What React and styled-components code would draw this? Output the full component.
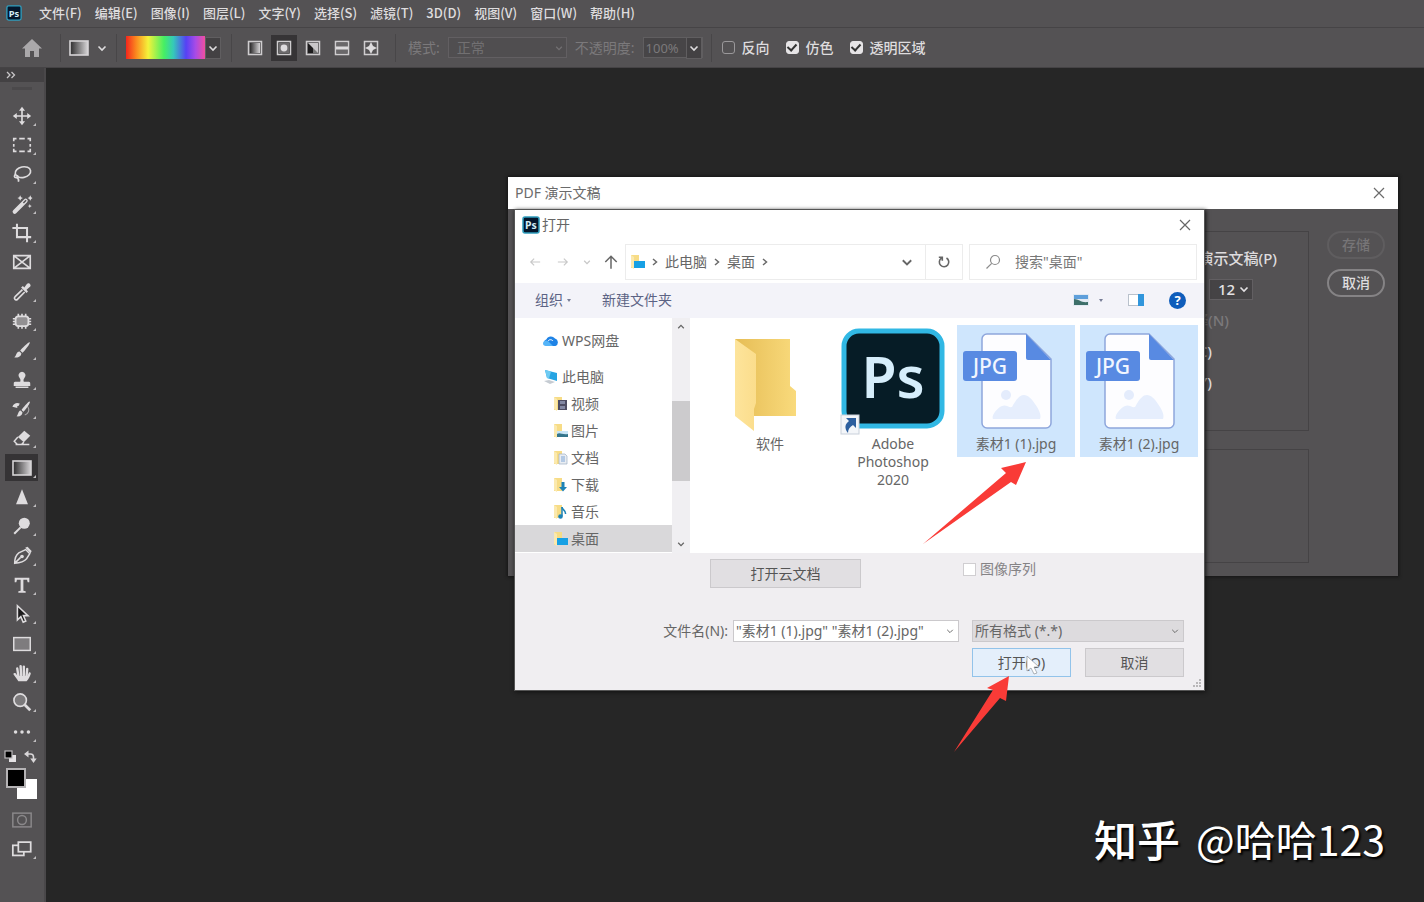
import React from "react";
import styled, { createGlobalStyle } from "styled-components";

const App = () => {
  return (
    <Page>
      <GlobalStyle />
      <MenuBar />
      <OptionsBar />
      <Workspace>
        <Toolbox />
        <Canvas>
          <PdfWindow />
          <OpenDialog />
          <Annotations />
          <Watermark>
            <b>知乎</b>
            <span>@哈哈123</span>
          </Watermark>
        </Canvas>
      </Workspace>
    </Page>
  );
};

const menus = [
  "文件(F)",
  "编辑(E)",
  "图像(I)",
  "图层(L)",
  "文字(Y)",
  "选择(S)",
  "滤镜(T)",
  "3D(D)",
  "视图(V)",
  "窗口(W)",
  "帮助(H)",
];

const MenuBar = () => (
  <StyledMenuBar>
    <PsLogo size={16} />
    <MenuList>
      {menus.map((menu) => (
        <MenuButton key={menu} type="button">
          {menu}
        </MenuButton>
      ))}
    </MenuList>
  </StyledMenuBar>
);

const PsLogo = ({ size }) => (
  <svg width={size} height={size} viewBox="0 0 18 18" aria-label="Photoshop">
    <rect x="1" y="1" width="16" height="16" rx="2" fill="#04162c" stroke="#2f9dbd" strokeWidth="1.5" />
    <text x="9" y="13" textAnchor="middle" fontFamily="Noto Sans" fontSize="10.5" fontWeight="700" fill="#d3ecf6">
      Ps
    </text>
  </svg>
);

const Chevron = ({ size = 10, width = 1.6 }) => (
  <svg width={size} height={size} viewBox="0 0 10 10" fill="none" stroke="currentColor" strokeWidth={width}>
    <path d="M1.5 3.5 5 7l3.500-3.500" />
  </svg>
);

const CloseIcon = () => (
  <svg width="12" height="12" viewBox="0 0 12 12" stroke="currentColor" strokeWidth="1.2">
    <path d="M1 1l10 10M11 1 1 11" />
  </svg>
);

const GradientIcon = ({ w = 20, h = 16 }) => (
  <svg width={w} height={h} viewBox="0 0 20 16">
    <defs>
      <linearGradient id="grey">
        <stop offset="0" stopColor="#2c2b2c" />
        <stop offset="1" stopColor="#d8d6d8" />
      </linearGradient>
    </defs>
    <rect x="1" y="1" width="18" height="14" fill="url(#grey)" stroke="#d6d4d6" strokeWidth="1.6" />
  </svg>
);

const gradientModes = [
  {
    name: "线性渐变",
    art: <rect x="3" y="3" width="10" height="10" fill="url(#grey)" />,
  },
  {
    name: "径向渐变",
    on: true,
    art: (
      <>
        <rect x="3" y="3" width="10" height="10" fill="#6d6b6d" />
        <circle cx="8" cy="8" r="3.4" fill="#dddbdd" />
      </>
    ),
  },
  {
    name: "角度渐变",
    art: (
      <>
        <rect x="3" y="3" width="10" height="10" fill="#c9c7c9" />
        <path d="M3 3l5 5v5H3z" fill="#1d1c1d" />
        <path d="M8 8l5 5H8z" fill="#777" />
      </>
    ),
  },
  {
    name: "对称渐变",
    art: (
      <>
        <rect x="3" y="3" width="10" height="10" fill="#6a686a" />
        <rect x="2" y="6.5" width="12" height="3" fill="#dddbdd" />
      </>
    ),
  },
  {
    name: "菱形渐变",
    art: (
      <>
        <rect x="3" y="3" width="10" height="10" fill="#555355" />
        <path d="M8 2l2 4 4 2-4 2-2 4-2-4-4-2 4-2z" fill="#dddbdd" />
      </>
    ),
  },
];

const OptionsBar = () => (
  <StyledOptionsBar>
    <HomeCell>
      <BareButton type="button" aria-label="主页">
        <svg width="20" height="18" viewBox="0 0 20 18" fill="#aaa8aa">
          <path d="M10 0 20 9.5h-3V18h-5v-6H8v6H3V9.5H0z" />
        </svg>
      </BareButton>
    </HomeCell>
    <ToolCell>
      <GradientIcon />
      <Chevron />
    </ToolCell>
    <GradientCell>
      <Rainbow />
      <DropButton type="button" aria-label="渐变选择">
        <Chevron />
      </DropButton>
    </GradientCell>
    <ModeCell>
      {gradientModes.map(({ name, on, art }) => (
        <ModeButton key={name} type="button" aria-label={name} $on={on}>
          <svg width="16" height="16" viewBox="0 0 16 16">
            <rect x="1.5" y="1.5" width="13" height="13" fill="none" stroke="#cfcdcf" strokeWidth="1.5" />
            {art}
          </svg>
        </ModeButton>
      ))}
    </ModeCell>
    <BlendCell>
      <DimLabel htmlFor="blend">模式:</DimLabel>
      <DarkSelect $width={119}>
        <select id="blend" disabled defaultValue="正常">
          <option>正常</option>
        </select>
        <Chevron size={8} />
      </DarkSelect>
      <DimLabel htmlFor="opacity">不透明度:</DimLabel>
      <Opacity>
        <input id="opacity" disabled defaultValue="100%" />
        <DropButton type="button" aria-label="不透明度选项">
          <Chevron />
        </DropButton>
      </Opacity>
    </BlendCell>
    <CheckCell>
      <DarkCheck>
        <input type="checkbox" />
        反向
      </DarkCheck>
      <DarkCheck>
        <input type="checkbox" defaultChecked />
        仿色
      </DarkCheck>
      <DarkCheck>
        <input type="checkbox" defaultChecked />
        透明区域
      </DarkCheck>
    </CheckCell>
  </StyledOptionsBar>
);

const line = { fill: "none", stroke: "currentColor", strokeWidth: 1.8 };

const tools = [
  {
    name: "移动",
    art: (
      <>
        <path d="M12 5v14M5 12h14" {...line} />
        <path d="M12 2l3.300 4.300H8.700zM12 22l3.300-4.300H8.700zM2 12l4.300-3.300v6.600zM22 12l-4.300-3.300v6.600z" />
      </>
    ),
  },
  {
    name: "矩形选框",
    art: <path d="M3 8V5h3M9 5h6M18 5h3v3M21 11v3M21 16v3h-3M15 19H9M6 19H3v-3M3 14v-3" {...line} />,
  },
  {
    name: "套索",
    art: (
      <>
        <ellipse cx="13" cy="10" rx="8.500" ry="5.800" transform="rotate(-12 13 10)" {...line} />
        <path d="M5 12c-2 2-1.500 4 .5 4s3-1.500 1-2.500M6.500 16c2 1 2 3 1.500 4.500" {...line} />
      </>
    ),
  },
  {
    name: "魔棒",
    art: (
      <>
        <path d="M4 20.500 16 8.500" stroke="currentColor" strokeWidth="4.500" strokeLinecap="round" />
        <path d="M13.500 11l3-3" stroke="#545254" strokeWidth="1.500" />
        <path d="M10 2.500l1 2 2 1-2 1-1 2-1-2-2-1 2-1zM21 2.500l1 2 1.500 1-1.500 1-1 2-1-2-2-1 2-1zM20.500 12l.7 1.500 1.500.7-1.500.7-.7 1.500-.7-1.500-1.500-.7 1.500-.7z" />
      </>
    ),
  },
  {
    name: "裁剪",
    art: <path d="M6.500 2v14.500H22M1.500 6.500h16V22" {...line} strokeWidth="2.2" />,
  },
  {
    name: "图框",
    noMore: true,
    art: <path d="M3 5h18v14H3zM3 5l18 14M21 5 3 19" {...line} />,
  },
  {
    name: "吸管",
    art: (
      <>
        <path d="M12.500 9.500 4.500 17c-2 2 .5 5 2.500 3l8-8" {...line} />
        <path d="M11 7l2-1.500 1.500 1.500 3-4c2-2 5 1 3.500 3l-4 3.500 1.500 2L17 13z" />
      </>
    ),
  },
  {
    name: "修补",
    art: (
      <>
        <rect x="5" y="7" width="14" height="10.500" rx="3" fill="#929092" stroke="currentColor" strokeWidth="2" />
        <path d="M8 4v3M12 4v3M16 4v3M8 17v3.500M12 17v3.500M16 17v3.500M2 9.500h3M2 12.500h3M2 15.500h3M19 9.500h3M19 12.500h3M19 15.500h3" {...line} />
      </>
    ),
  },
  {
    name: "画笔",
    art: (
      <path d="M20.500 3.500c1 1-6 10-8 11.500l-2.500-2.500c1.500-2 9.500-10 10.500-9zM9.300 13.500l2 2c0 3-3.300 5.500-7.800 4.500 2.500-1.500 2-6.500 5.800-6.500z" />
    ),
  },
  {
    name: "仿制图章",
    art: (
      <path d="M12 3a4 4 0 0 1 2.500 7c-1 1-1 2.500-.5 4h5.500c1 0 1.500.8 1.500 2v2.500H3V16c0-1.200.5-2 1.500-2H10c.5-1.500.5-3-.5-4A4 4 0 0 1 12 3zM5 19h14v1.800H5z" />
    ),
  },
  {
    name: "历史记录画笔",
    art: (
      <>
        <path d="M20.500 4c1 1-5 9.500-7 11l-2-2c1.500-2 8-10 9-9zM10.500 13.500l2 2c0 3-2.500 5-6.500 4.500 2-1.500 1.500-6 4.500-6.500zM1.500 9.500c1.500-4 5-5 8-3.500l-1 2.500c-2 0-2 1-1.500 2.500z" />
        <path d="M18 9c3 4 1 8-3 9.500" {...line} strokeWidth="1.200" opacity=".6" />
      </>
    ),
  },
  {
    name: "橡皮擦",
    art: (
      <>
        <path d="M14.500 4 21 9.500l-7 7L7.500 11z" />
        <path d="M7.500 11 3.500 15.500 7 19h4.500l2.500-2.500M5 19.200h15" {...line} strokeWidth="1.600" />
      </>
    ),
  },
  { name: "渐变", on: true, art: null },
  { name: "锐化", art: <path d="M12 3.500 18.500 20h-13z" /> },
  {
    name: "减淡",
    art: (
      <>
        <circle cx="14.500" cy="9" r="6" />
        <path d="M10.500 13.500 3.500 20.500" {...line} strokeWidth="2.200" />
      </>
    ),
  },
  {
    name: "钢笔",
    art: (
      <>
        <path d="M4 20c0-5 1-9 4.500-11.500L16 5l4.500 4.500L17 15c-3 3.500-7 4.500-13 5zM4.500 19.500l6-6" {...line} strokeWidth="1.600" />
        <circle cx="12" cy="12.500" r="2" />
        <path d="M15.500 3l6 6 1-2.500-4.500-4.500z" />
      </>
    ),
  },
  {
    name: "文字",
    art: <path d="M4 4h16v5h-1.800l-.7-2.800H13.500v12l2.500.6V20.500H8v-1.700l2.500-.6v-12H6.500L5.800 9H4z" />,
  },
  {
    name: "路径选择",
    art: (
      <path
        d="M7 3v15.500l3.700-3.600 2.600 6 2.800-1.200-2.600-5.900h5z"
        fill="#1c1b1c"
        stroke="currentColor"
        strokeWidth="1.700"
      />
    ),
  },
  {
    name: "矩形",
    art: <rect x="3" y="5" width="18" height="14" fill="#7e7c7e" stroke="currentColor" strokeWidth="1.600" />,
  },
  {
    name: "抓手",
    art: (
      <>
        <path d="M8 21c-1.500-2.500-3.500-5-5.500-8 .8-1.500 2.500-1 3.500.5l1.500 1.500h10.500l1.500-3.500c1-1 2.500 0 2 1.500-1 3-2.500 6-4.500 8z" />
        <path d="M8 15 6.800 7M11 14.500 10.500 4.500M14 14.500V5M17 15l.7-7.500" stroke="currentColor" strokeWidth="2.600" strokeLinecap="round" />
      </>
    ),
  },
  {
    name: "缩放",
    art: (
      <>
        <circle cx="10" cy="10" r="6.800" fill="#7b797b" stroke="currentColor" strokeWidth="1.800" />
        <path d="M15 15l6 6" stroke="currentColor" strokeWidth="3" />
      </>
    ),
  },
  {
    name: "编辑工具栏",
    art: (
      <>
        <circle cx="5" cy="12" r="1.900" />
        <circle cx="12" cy="12" r="1.900" />
        <circle cx="19" cy="12" r="1.900" />
      </>
    ),
  },
];

const Tool = ({ name, art, on, noMore, dim }) => (
  <ToolButton type="button" aria-label={name} $on={on} $noMore={noMore} $dim={dim}>
    {art ? (
      <svg width="22" height="22" viewBox="0 0 24 24" fill="currentColor">
        {art}
      </svg>
    ) : (
      <GradientIcon />
    )}
  </ToolButton>
);

const Toolbox = () => (
  <StyledToolbox>
    <ToolboxHead>
      <svg width="10" height="8" viewBox="0 0 10 8" fill="none" stroke="#c8c6c8" strokeWidth="1.3">
        <path d="M1 1l3 3-3 3M5.500 1l3 3-3 3" />
      </svg>
    </ToolboxHead>
    <Grip />
    <ToolList>
      {tools.map((tool) => (
        <li key={tool.name}>
          <Tool {...tool} />
        </li>
      ))}
    </ToolList>
    <SwatchActions>
      <svg width="13" height="13" viewBox="0 0 13 13">
        <rect x="5" y="5" width="7" height="7" fill="#e4e2e4" />
        <rect x="1" y="1" width="7" height="7" fill="#000" stroke="#bbb9bb" strokeWidth="1.2" />
      </svg>
      <svg width="13" height="13" viewBox="0 0 13 13" fill="#d8d6d8">
        <path d="M4 4h2.500c2 0 3 1 3 3v2" fill="none" stroke="#d8d6d8" strokeWidth="1.600" />
        <path d="M0 4l4.500-3.500v7zM9.500 13 6.300 8.500h6.400z" />
      </svg>
    </SwatchActions>
    <Swatches>
      <Swatch $back />
      <Swatch />
    </Swatches>
    <ToolList>
      <li>
        <Tool
          name="快速蒙版"
          noMore
          dim
          art={
            <g fill="none" stroke="currentColor" strokeWidth="1.600">
              <rect x="2" y="4.500" width="20" height="15" />
              <circle cx="12" cy="12" r="4.800" />
            </g>
          }
        />
      </li>
      <li>
        <Tool
          name="屏幕模式"
          art={
            <g fill="#545254" stroke="currentColor" strokeWidth="1.900">
              <rect x="2" y="8" width="12" height="11" />
              <rect x="8" y="4.500" width="13.500" height="10.500" />
            </g>
          }
        />
      </li>
    </ToolList>
  </StyledToolbox>
);

const PdfWindow = () => (
  <StyledPdfWindow>
    <PdfTitle>
      <span>PDF 演示文稿</span>
      <BareButton type="button" aria-label="关闭">
        <CloseIcon />
      </BareButton>
    </PdfTitle>
    <PdfBody>
      <PdfGroups>
        <PdfGroup>
          <PdfRow $end={31}>演示文稿(P)</PdfRow>
          <PdfRow $end={55}>
            <DarkSelect $width={44} $bright>
              <select aria-label="字体大小" defaultValue="12">
                <option>12</option>
              </select>
              <Chevron />
            </DarkSelect>
          </PdfRow>
          <PdfRow $end={79} $dim>
            注释(N)
          </PdfRow>
          <PdfRow $end={96}>背景(C)</PdfRow>
          <PdfRow $end={96}>作者(Y)</PdfRow>
        </PdfGroup>
        <PdfGroup $short />
      </PdfGroups>
      <PdfActions>
        <PillButton type="button" disabled>
          存储
        </PillButton>
        <PillButton type="button">取消</PillButton>
      </PdfActions>
    </PdfBody>
  </StyledPdfWindow>
);

const SmallFolder = ({ children }) => (
  <svg width="16" height="16" viewBox="0 0 16 16">
    <path d="M2 1h8v13H2z" fill="#f7dc86" />
    <path d="M2 1l3 2v12l-3-2z" fill="#fbe9ae" />
    {children}
  </svg>
);

const DesktopFolder = () => (
  <SmallFolder>
    <path d="M5 7h11v7H5z" fill="#17a0e4" />
  </SmallFolder>
);

const places = [
  {
    name: "WPS网盘",
    icon: (
      <svg width="16" height="16" viewBox="0 0 16 16">
        <path d="M4 13a3.500 3.500 0 0 1-.5-6.800A5 5 0 0 1 12 5.500a4 4 0 0 1 .5 7.500z" fill="#1f83e6" />
        <path d="M0 10.500C0 8 3 6.500 5 8l5 5H3c-2 0-3-1-3-2.500z" fill="#54b4f8" />
        <path d="M5 8c1.500-2 4-1.500 5 0" fill="none" stroke="#fff" />
      </svg>
    ),
  },
  {
    name: "此电脑",
    icon: (
      <svg width="16" height="16" viewBox="0 0 16 16">
        <path d="M2 1l12 3v8L4 9z" fill="#25a4e3" />
        <path d="M2 1l6 1.500L6 9.500 4 9z" fill="#6fcbf3" />
        <path d="M1 12l5-1 6 2-5 2z" fill="#c5cbd2" />
      </svg>
    ),
  },
  {
    name: "视频",
    sub: true,
    icon: (
      <SmallFolder>
        <path d="M6 4h9v10H6z" fill="#4d4d63" />
        <path d="M8 5h5v3H8zM8 10h5v3H8z" fill="#8288a3" />
      </SmallFolder>
    ),
  },
  {
    name: "图片",
    sub: true,
    icon: (
      <SmallFolder>
        <path d="M5 8h11v6H5z" fill="#c8e5f6" />
        <path d="M5 11c3-2 5 1 11 0v3H5z" fill="#34758c" />
      </SmallFolder>
    ),
  },
  {
    name: "文档",
    sub: true,
    icon: (
      <SmallFolder>
        <path d="M7 4h6l2 2v8H7z" fill="#e9edf2" stroke="#9fb0c4" strokeWidth=".7" />
        <path d="M9 7h4M9 9h4M9 11h4" stroke="#7fa6d6" />
      </SmallFolder>
    ),
  },
  {
    name: "下载",
    sub: true,
    icon: (
      <SmallFolder>
        <path d="M9.500 5h3v5H15l-4 4.500L7 10h2.500z" fill="#1d83b7" />
      </SmallFolder>
    ),
  },
  {
    name: "音乐",
    sub: true,
    icon: (
      <SmallFolder>
        <path d="M10 3c0 3 4 3 3.500 7" fill="none" stroke="#1d83b7" strokeWidth="1.500" />
        <path d="M10 3v9" stroke="#1d83b7" strokeWidth="1.500" />
        <circle cx="8.500" cy="12.500" r="2.300" fill="#1d83b7" />
      </SmallFolder>
    ),
  },
  { name: "桌面", sub: true, on: true, icon: <DesktopFolder /> },
];

const FolderArt = () => (
  <svg width="118" height="110" viewBox="0 0 118 110">
    <defs>
      <linearGradient id="folderBack">
        <stop offset="0" stopColor="#e6bd55" />
        <stop offset="1" stopColor="#f9da7c" />
      </linearGradient>
      <linearGradient id="folderFront">
        <stop offset="0" stopColor="#fde49b" />
        <stop offset="1" stopColor="#fbdd8c" />
      </linearGradient>
    </defs>
    <path d="M24 14h55v47l6 5v25H40z" fill="url(#folderBack)" />
    <path d="M24 14l21 15v49l-2 6v22L24 91z" fill="url(#folderFront)" />
  </svg>
);

const PhotoshopArt = () => (
  <svg width="118" height="110" viewBox="0 0 118 110">
    <rect x="10" y="6" width="98" height="95" rx="15" fill="#061c26" stroke="#31b8e4" strokeWidth="5" />
    <text x="59" y="73" textAnchor="middle" fontFamily="Noto Sans" fontSize="57" fontWeight="600" fill="#d6eefb">
      Ps
    </text>
    <rect x="7" y="90" width="18" height="19" fill="#f4f6f9" stroke="#c9d0da" />
    <path d="M12 93h10v10l-3-3c-3 2-5 4-5 8-4-5-3-9 1-12z" fill="#2d5f9e" />
  </svg>
);

const JpgArt = () => (
  <svg width="118" height="110" viewBox="0 0 118 110">
    <path
      d="M30 9h39l25 25v64a5 5 0 0 1-5 5H30a5 5 0 0 1-5-5V14a5 5 0 0 1 5-5z"
      fill="#fdfdff"
      stroke="#8ea6dc"
      strokeWidth="1.500"
    />
    <path d="M69 9l25 26H71a2 2 0 0 1-2-2z" fill="#588ae2" />
    <circle cx="49" cy="70" r="5" fill="#e4ecfc" />
    <path d="M36 94c-2-3 4-11 9-13 4-2 7 2 10 1 5-9 8-12 12-12s8 4 11 9c3 4 7 11 5 15z" fill="#e6eefd" />
    <rect x="6" y="26" width="54" height="30" rx="3" fill="#588ae2" />
    <text x="33" y="49" textAnchor="middle" fontFamily="Noto Sans" fontSize="21" fontWeight="500" fill="#f2f6ff">
      JPG
    </text>
  </svg>
);

const files = [
  { name: "软件", art: <FolderArt /> },
  { name: "Adobe Photoshop 2020", art: <PhotoshopArt /> },
  { name: "素材1 (1).jpg", art: <JpgArt />, on: true },
  { name: "素材1 (2).jpg", art: <JpgArt />, on: true },
];

const ArrowIcon = ({ d, size = 14 }) => (
  <svg width={size} height={size} viewBox="0 0 14 14" fill="none" stroke="currentColor" strokeWidth="1.300">
    <path d={d} />
  </svg>
);

const CrumbArrow = () => (
  <svg width="6" height="8" viewBox="0 0 6 8" fill="none" stroke="#6a6a6a" strokeWidth="1.500">
    <path d="M1 1l3.500 3L1 7" />
  </svg>
);

const OpenDialog = () => (
  <StyledDialog role="dialog" aria-label="打开">
    <DialogTitle>
      <PsLogo size={18} />
      <span>打开</span>
      <BareButton type="button" aria-label="关闭">
        <CloseIcon />
      </BareButton>
    </DialogTitle>
    <NavRow>
      <NavButtons>
        <NavButton type="button" aria-label="后退" disabled>
          <ArrowIcon size={12} d="M13 7H2M6 3 2 7l4 4" />
        </NavButton>
        <NavButton type="button" aria-label="前进" disabled>
          <ArrowIcon size={12} d="M1 7h11M8 3l4 4-4 4" />
        </NavButton>
        <NavButton type="button" aria-label="最近位置" disabled $narrow>
          <Chevron size={8} />
        </NavButton>
        <NavButton type="button" aria-label="向上">
          <ArrowIcon size={16} d="M7 13V2M2 7l5-5 5 5" />
        </NavButton>
      </NavButtons>
      <AddressBar>
        <DesktopFolder />
        <CrumbArrow />
        <Crumb href="#pc">此电脑</Crumb>
        <CrumbArrow />
        <Crumb href="#desktop">桌面</Crumb>
        <CrumbArrow />
        <AddressDrop type="button" aria-label="历史记录">
          <Chevron size={12} />
        </AddressDrop>
        <RefreshButton type="button" aria-label="刷新">
          <svg width="14" height="14" viewBox="0 0 14 14" fill="none" stroke="currentColor" strokeWidth="1.600">
            <path d="M9.500 3A4.700 4.700 0 1 1 4.300 3.200M1.800 2.300h3.500v3.500" />
          </svg>
        </RefreshButton>
      </AddressBar>
      <SearchBox>
        <svg width="16" height="16" viewBox="0 0 16 16" fill="none" stroke="#8b8b8b" strokeWidth="1.200">
          <circle cx="10" cy="6" r="4.500" />
          <path d="M6.700 9.300 1.500 14.500" />
        </svg>
        <input type="search" aria-label="搜索" placeholder={'搜索"桌面"'} />
      </SearchBox>
    </NavRow>
    <CommandBar>
      <CommandButton type="button">
        组织
        <Caret />
      </CommandButton>
      <CommandButton type="button">新建文件夹</CommandButton>
      <ViewButtons>
        <CommandButton type="button" aria-label="视图" $wide>
          <svg width="16" height="12" viewBox="0 0 16 12">
            <rect width="16" height="12" fill="#e2eaf3" />
            <path d="M1 1h14v4H1z" fill="#5e9fdb" />
            <path d="M1 5c5 0 7 4 14 3v3H1z" fill="#3d6f6a" />
          </svg>
          <Caret />
        </CommandButton>
        <CommandButton type="button" aria-label="预览窗格">
          <svg width="16" height="12" viewBox="0 0 16 12">
            <rect x=".5" y=".5" width="15" height="11" fill="#fff" stroke="#b9c1cc" />
            <path d="M10 0h6v12h-6z" fill="#3196dc" />
          </svg>
        </CommandButton>
        <HelpButton type="button">?</HelpButton>
      </ViewButtons>
    </CommandBar>
    <Browser>
      <PlaceList>
        {places.map(({ name, icon, sub, on }) => (
          <Place key={name} $sub={sub} $on={on}>
            {icon}
            {name}
          </Place>
        ))}
      </PlaceList>
      <ScrollTrack>
        <ScrollArrow $up>
          <Chevron size={8} />
        </ScrollArrow>
        <ScrollThumb />
        <ScrollArrow>
          <Chevron size={8} />
        </ScrollArrow>
      </ScrollTrack>
      <FileGrid>
        {files.map(({ name, art, on }) => (
          <FileTile key={name} $on={on}>
            {art}
            <span>{name}</span>
          </FileTile>
        ))}
      </FileGrid>
    </Browser>
    <Footer>
      <CloudRow>
        <WinButton type="button" $width={151}>
          打开云文档
        </WinButton>
        <LightCheck>
          <input type="checkbox" disabled />
          图像序列
        </LightCheck>
      </CloudRow>
      <FieldRow>
        <label htmlFor="filename">文件名(N):</label>
        <NameField>
          <input id="filename" defaultValue={'"素材1 (1).jpg" "素材1 (2).jpg"'} />
          <Chevron size={8} width={1.2} />
        </NameField>
        <FormatField>
          <select aria-label="文件格式" defaultValue="所有格式 (*.*)">
            <option>所有格式 (*.*)</option>
          </select>
          <Chevron size={8} width={1.2} />
        </FormatField>
      </FieldRow>
      <ButtonRow>
        <WinButton type="button" $width={99} $hot>
          打开(O)
        </WinButton>
        <WinButton type="button" $width={99}>
          取消
        </WinButton>
      </ButtonRow>
      <ResizeGrip width="10" height="10" viewBox="0 0 10 10" fill="#b9b7b9">
        <path d="M7 1h2v2H7zM7 4h2v2H7zM7 7h2v2H7zM4 4h2v2H4zM4 7h2v2H4zM1 7h2v2H1z" />
      </ResizeGrip>
    </Footer>
  </StyledDialog>
);

// Coordinates are relative to the canvas' top-left corner
const Annotations = () => (
  <Overlay width="1100" height="700" viewBox="0 0 1100 700">
    <g fill="#f93b37">
      <path d="M980 394 955 400l5 5L877 476 965 414l5 3z" />
      <path d="M963 608 941 620l6 2L908 684 954 630l6 3z" />
    </g>
    <path
      d="M981 588v15l4-3 3 6 3-1-3-6h5z"
      fill="#fff"
      stroke="#8e959c"
      strokeWidth=".7"
    />
  </Overlay>
);

const GlobalStyle = createGlobalStyle`
  * {
    margin: 0;
    padding: 0;
    box-sizing: border-box;
  }
  body {
    background: #262626;
    color: #dedcde;
    font-family: "Noto Sans", "Noto Sans CJK SC", sans-serif;
    font-size: 14px;
    line-height: 20px;
  }
  button, input, select {
    font: inherit;
    color: inherit;
    border: none;
    background: none;
    border-radius: 0;
    outline: none;
  }
  ul {
    list-style: none;
  }
  svg {
    display: block;
    flex: none;
  }
`;

const Page = styled.div`
  min-height: 100vh;
  display: flex;
  flex-direction: column;
`;

const StyledMenuBar = styled.header`
  display: flex;
  align-items: center;
  gap: 17px;
  height: 28px;
  padding: 0 6px 1px;
  background: #545254;
  border-bottom: 1px solid #464446;
`;

const MenuList = styled.nav`
  display: flex;
  gap: 13px;
`;

const MenuButton = styled.button`
  font-family: "Noto Sans CJK SC", sans-serif;
  font-size: 13px;
  font-weight: 500;
`;

const BareButton = styled.button`
  display: grid;
  place-items: center;
`;

const StyledOptionsBar = styled.div`
  display: flex;
  align-items: center;
  height: 40px;
  background: #545254;
  border-bottom: 1px solid #454345;
`;

const OptionCell = styled.div`
  display: flex;
  align-items: center;
  height: 28px;
  border-right: 1px solid #484648;
`;

const HomeCell = styled(OptionCell)`
  padding: 0 18px 0 22px;
`;

const ToolCell = styled(OptionCell)`
  gap: 8px;
  padding: 0 9px 0 8px;
`;

const GradientCell = styled(OptionCell)`
  padding: 0 10px 0 9px;
`;

const Rainbow = styled.div`
  width: 79px;
  height: 23px;
  background: linear-gradient(
    90deg,
    #f3261d,
    #fb8a1f 13%,
    #f4f23a 28%,
    #46ef63 48%,
    #35c9b9 60%,
    #5541f5 76%,
    #a84be6 88%,
    #ef4f9f
  );
`;

const DropButton = styled.button`
  display: grid;
  place-items: center;
  width: 16px;
  height: 22px;
  background: #434143;
  border: 1px solid #605e60;
`;

const ModeCell = styled(OptionCell)`
  gap: 3px;
  padding: 0 11px 0 10px;
`;

const ModeButton = styled.button`
  display: grid;
  place-items: center;
  width: 26px;
  height: 26px;
  background: ${(p) => (p.$on ? "#363436" : "none")};
`;

const BlendCell = styled(OptionCell)`
  gap: 8px;
  padding: 0 8px 0 12px;
`;

const DimLabel = styled.label`
  color: #7b797b;
`;

const DarkSelect = styled.div`
  display: grid;
  align-items: center;
  width: ${(p) => p.$width}px;
  height: 21px;
  color: ${(p) => (p.$bright ? "#e4e2e4" : "#727072")};
  background: ${(p) => (p.$bright ? "#454345" : "#504e50")};
  border: 1px solid #625f62;
  select {
    grid-area: 1 / 1;
    appearance: none;
    width: 100%;
    padding-left: 8px;
    opacity: 1;
    line-height: 18px;
  }
  svg {
    grid-area: 1 / 1;
    justify-self: end;
    margin-right: 3px;
    pointer-events: none;
  }
`;

const Opacity = styled.div`
  display: flex;
  align-items: center;
  height: 21px;
  background: #474547;
  border: 1px solid #605e60;
  input {
    width: 42px;
    padding-left: 2px;
    color: #7b797b;
    font-size: 13px;
  }
`;

const CheckCell = styled.div`
  display: flex;
  gap: 16px;
  padding-left: 10px;
`;

const DarkCheck = styled.label`
  display: flex;
  align-items: center;
  gap: 7px;
  font-weight: 500;
  input {
    appearance: none;
    display: grid;
    place-items: center;
    width: 13px;
    height: 13px;
    border: 1px solid #9a989a;
    border-radius: 3px;
  }
  input:checked {
    background: #e6e4e6;
    border-color: #e6e4e6;
  }
  input:checked::after {
    content: "";
    width: 4px;
    height: 7px;
    margin-bottom: 2px;
    border: solid #333;
    border-width: 0 2px 2px 0;
    transform: rotate(42deg);
  }
`;

const Workspace = styled.div`
  flex: 1;
  display: flex;
`;

const StyledToolbox = styled.aside`
  flex: none;
  width: 46px;
  padding-bottom: 36px;
  background: #545254;
  border-right: 2px solid #4a484a;
`;

const ToolboxHead = styled.div`
  display: flex;
  align-items: center;
  height: 14px;
  padding-left: 6px;
  background: #434143;
`;

const Grip = styled.div`
  width: 20px;
  height: 3px;
  margin: 5px 12px 11px;
  background: #4b494b;
`;

const ToolList = styled.ul`
  li {
    display: grid;
    align-items: center;
    height: 29px;
    padding-left: 5px;
  }
  li:nth-child(3n) {
    margin-bottom: 1px;
  }
`;

const ToolButton = styled.button`
  position: relative;
  display: grid;
  place-items: center;
  width: 33px;
  height: 27px;
  color: ${(p) => (p.$dim ? "#8a888a" : "#dedcde")};
  background: ${(p) => (p.$on ? "#353335" : "none")};
  &::after {
    content: "";
    display: ${(p) => (p.$noMore ? "none" : "block")};
    position: absolute;
    right: 2px;
    bottom: 3px;
    border: solid transparent;
    border-width: 3px 0 0 3px;
    border-bottom: 0;
    border-right: 3px solid #bfbdbf;
  }
`;

const SwatchActions = styled.div`
  display: flex;
  align-items: center;
  gap: 7px;
  height: 20px;
  padding-left: 4px;
`;

const Swatches = styled.div`
  position: relative;
  height: 31px;
  margin: 2px 6px 6px;
`;

const Swatch = styled.div`
  position: absolute;
  top: ${(p) => (p.$back ? 11 : 0)}px;
  left: ${(p) => (p.$back ? 11 : 0)}px;
  width: 20px;
  height: 20px;
  background: ${(p) => (p.$back ? "#fff" : "#000")};
  border: 2px solid ${(p) => (p.$back ? "#fff" : "#b5b3b5")};
`;

const Canvas = styled.main`
  position: relative;
  flex: 1;
  min-width: 0;
  overflow: hidden;
  background: #262626;
`;

const StyledPdfWindow = styled.section`
  position: absolute;
  top: 109px;
  left: 462px;
  width: 890px;
  background: #545254;
  box-shadow: 0 0 3px 1px #151515;
`;

const PdfTitle = styled.div`
  display: flex;
  align-items: center;
  justify-content: space-between;
  height: 32px;
  padding: 0 13px 0 7px;
  color: #6b6b6b;
  background: #fff;
`;

const PdfBody = styled.div`
  display: flex;
  gap: 18px;
  padding: 22px 13px 13px;
`;

const PdfGroups = styled.div`
  flex: 1;
  display: flex;
  flex-direction: column;
  gap: 18px;
`;

const PdfGroup = styled.div`
  display: flex;
  flex-direction: column;
  gap: 1px;
  min-height: ${(p) => (p.$short ? 114 : 200)}px;
  padding-top: 11px;
  border: 1px solid #454345;
`;

const PdfRow = styled.div`
  display: flex;
  align-items: center;
  justify-content: flex-end;
  gap: 6px;
  height: 30px;
  padding-right: ${(p) => p.$end}px;
  color: ${(p) => (p.$dim ? "#7b797b" : "#dedcde")};
  font-size: 15px;
  font-weight: 500;
`;

const PdfActions = styled.div`
  display: flex;
  flex-direction: column;
  gap: 10px;
`;

const PillButton = styled.button`
  width: 58px;
  height: 28px;
  border: 2px solid #858385;
  border-radius: 14px;
  font-weight: 500;
  &:disabled {
    color: #777577;
    border-color: #5f5d5f;
  }
`;

const StyledDialog = styled.section`
  position: absolute;
  top: 142px;
  left: 469px;
  width: 689px;
  color: #666;
  background: #fff;
  box-shadow: 0 0 0 1px #555, 1px 1px 4px 1px #111;
`;

const DialogTitle = styled.div`
  display: flex;
  align-items: center;
  gap: 2px;
  height: 31px;
  padding: 0 13px 1px 7px;
  button {
    margin-left: auto;
  }
`;

const NavRow = styled.div`
  display: flex;
  gap: 6px;
  height: 42px;
  padding: 3px 7px 3px 10px;
`;

const NavButtons = styled.div`
  display: flex;
  align-items: center;
  gap: 8px;
  margin-right: -2px;
`;

const NavButton = styled(BareButton)`
  width: ${(p) => (p.$narrow ? 12 : 20)}px;
  height: 20px;
  &:disabled {
    color: #c8c8c8;
  }
`;

const AddressBar = styled.div`
  flex: 1;
  display: flex;
  align-items: center;
  gap: 7px;
  padding-left: 3px;
  border: 1px solid #ececec;
`;

const Crumb = styled.a`
  color: inherit;
  text-decoration: none;
`;

const AddressDrop = styled(BareButton)`
  width: 12px;
  margin-left: auto;
`;

const RefreshButton = styled(BareButton)`
  align-self: stretch;
  width: 37px;
  margin-left: 5px;
  border-left: 1px solid #ececec;
`;

const SearchBox = styled.div`
  display: flex;
  align-items: center;
  gap: 14px;
  width: 228px;
  padding-left: 15px;
  border: 1px solid #ececec;
  input {
    width: 150px;
  }
  input::placeholder {
    color: #777;
    opacity: 1;
  }
`;

const CommandBar = styled.div`
  display: flex;
  align-items: center;
  gap: 31px;
  height: 35px;
  padding: 0 18px 1px 20px;
  color: #5c6384;
  background: #f3f3f9;
`;

const CommandButton = styled.button`
  display: flex;
  align-items: center;
  gap: ${(p) => (p.$wide ? 10 : 4)}px;
`;

const Caret = styled.i`
  border: solid transparent;
  border-width: 3px 2px 0;
  border-top-color: #777d96;
`;

const ViewButtons = styled.div`
  display: flex;
  align-items: center;
  gap: 25px;
  margin-left: auto;
`;

const HelpButton = styled.button`
  width: 17px;
  height: 17px;
  border-radius: 50%;
  background: #0f5dbb;
  color: #fff;
  font-size: 13px;
  font-weight: 700;
  line-height: 17px;
`;

const Browser = styled.div`
  display: flex;
  height: 235px;
`;

const PlaceList = styled.ul`
  width: 157px;
  padding-top: 9px;
  li:first-child {
    margin-bottom: 9px;
  }
`;

const Place = styled.li`
  display: flex;
  align-items: center;
  gap: 3px;
  height: 27px;
  padding-left: ${(p) => (p.$sub ? 37 : 28)}px;
  background: ${(p) => (p.$on ? "#d9d8da" : "none")};
`;

const ScrollTrack = styled.div`
  display: flex;
  flex-direction: column;
  justify-content: space-between;
  width: 18px;
  background: #f0eff2;
`;

const ScrollArrow = styled.div`
  display: grid;
  place-items: center;
  height: 18px;
  transform: ${(p) => (p.$up ? "rotate(180deg)" : "none")};
`;

const ScrollThumb = styled.div`
  height: 80px;
  margin-top: 10px;
  background: #cccbcd;
`;

const FileGrid = styled.ul`
  flex: 1;
  display: flex;
  align-items: flex-start;
  gap: 5px;
  padding: 7px 6px 0 21px;
`;

const FileTile = styled.li`
  width: 118px;
  min-height: 132px;
  background: ${(p) => (p.$on ? "#cfe6fd" : "none")};
  text-align: center;
  line-height: 18px;
  span {
    display: block;
    padding: 0 14px;
  }
`;

const Footer = styled.div`
  position: relative;
  padding: 6px 20px 13px;
  background: #f0eef1;
`;

const CloudRow = styled.div`
  display: flex;
  gap: 102px;
  padding-left: 175px;
`;

const WinButton = styled.button`
  width: ${(p) => p.$width}px;
  height: 29px;
  color: #555;
  background: ${(p) => (p.$hot ? "#e4effb" : "#e1dfe2")};
  border: 1px solid ${(p) => (p.$hot ? "#92c3ea" : "#cbc9cc")};
`;

const LightCheck = styled.label`
  display: flex;
  align-items: center;
  gap: 4px;
  height: 20px;
  color: #858386;
  input {
    appearance: none;
    width: 13px;
    height: 13px;
    background: #fff;
    border: 1px solid #d0ced1;
  }
`;

const FieldRow = styled.div`
  display: flex;
  align-items: center;
  justify-content: flex-end;
  margin-top: 32px;
`;

const Field = styled.div`
  display: grid;
  align-items: center;
  height: 22px;
  border: 1px solid #cbc9cc;
  input,
  select {
    grid-area: 1 / 1;
    appearance: none;
    width: 100%;
    padding-left: 2px;
  }
  svg {
    grid-area: 1 / 1;
    justify-self: end;
    margin-right: 4px;
    pointer-events: none;
  }
`;

const NameField = styled(Field)`
  width: 226px;
  margin: 0 13px 0 5px;
  background: #fff;
`;

const FormatField = styled(Field)`
  width: 212px;
  background: #dddbde;
`;

const ButtonRow = styled.div`
  display: flex;
  justify-content: flex-end;
  gap: 14px;
  margin-top: 6px;
`;

const ResizeGrip = styled.svg`
  position: absolute;
  right: 2px;
  bottom: 2px;
`;

const Overlay = styled.svg`
  position: absolute;
  top: 0;
  left: 0;
  pointer-events: none;
`;

const Watermark = styled.div`
  position: absolute;
  right: 39px;
  bottom: 34px;
  display: flex;
  align-items: center;
  gap: 16px;
  color: #fff;
  font-family: "Noto Sans CJK SC", sans-serif;
  font-size: 41px;
  line-height: 60px;
  text-shadow: 2px 2px 2px #000;
  b {
    font-size: 43px;
    font-weight: 500;
  }
`;

export default App;
